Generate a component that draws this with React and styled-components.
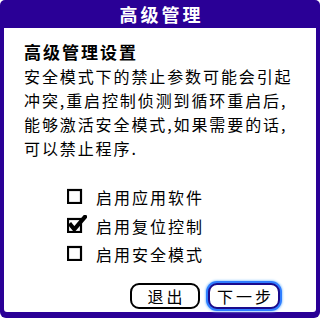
import React, { useState } from 'react';
import styled, { createGlobalStyle } from 'styled-components';

const GlobalStyle = createGlobalStyle`
  html, body {
    margin: 0;
    padding: 0;
    background: #ffffff;
  }
  body {
    font-family: "Noto Sans CJK SC", "Noto Sans", sans-serif;
  }
`;

const options = [
  { id: 'apps', label: '启用应用软件', checked: false },
  { id: 'reset', label: '启用复位控制', checked: true },
  { id: 'safe', label: '启用安全模式', checked: false },
];

const lines = [
  '安全模式下的禁止参数可能会引起',
  '冲突,重启控制侦测到循环重启后,',
  '能够激活安全模式,如果需要的话,',
  '可以禁止程序.',
];

const CheckIcon = ({ checked }) => (
  <svg width="20" height="18" viewBox="0 0 20 18">
    <rect x="1" y="4" width="13" height="13" fill="#fff" stroke="#000" strokeWidth="2.2" />
    {checked && (
      <path d="M3.8 10 L7.3 14.3 L18 1.8" fill="none" stroke="#000" strokeWidth="4.2" strokeLinecap="square" strokeLinejoin="miter" />
    )}
  </svg>
);

const App = () => {
  const [opts, setOpts] = useState(options);

  const toggle = (id) => {
    setOpts((list) => list.map((o) => (o.id === id ? { ...o, checked: !o.checked } : o)));
  };

  return (
    <>
      <GlobalStyle />
      <Dialog>
        <TitleBar>高级管理</TitleBar>
        <Body>
          <Heading>高级管理设置</Heading>
          <Text>
            {lines.map((l, i) => (
              <Line key={i}>{l}</Line>
            ))}
          </Text>
          <OptionList>
            {opts.map((o) => (
              <Option key={o.id} onClick={() => toggle(o.id)}>
                <CheckIcon checked={o.checked} />
                <OptionLabel>{o.label}</OptionLabel>
              </Option>
            ))}
          </OptionList>
          <ButtonRow>
            <Button>退出</Button>
            <Button $focused>下一步</Button>
          </ButtonRow>
        </Body>
      </Dialog>
    </>
  );
};

const Dialog = styled.div`
  width: 320px;
  height: 318px;
  box-sizing: border-box;
  display: flex;
  flex-direction: column;
  background-color: #2a0096;
  border-radius: 5px 5px 6px 6px;
  padding: 0 4px 6px 4px;
`;

const TitleBar = styled.div`
  height: 28px;
  display: flex;
  align-items: center;
  justify-content: center;
  color: #ffffff;
  font-weight: 700;
  font-size: 18px;
  letter-spacing: 3px;
  padding-left: 3px;
`;

const Body = styled.div`
  flex: 1;
  display: flex;
  flex-direction: column;
  background-color: #ffffff;
  border-radius: 0 0 3px 3px;
  padding: 12px 0 0 20px;
  color: #000;
`;

const Heading = styled.div`
  font-weight: 700;
  font-size: 17px;
  line-height: 24px;
  letter-spacing: 2px;
`;

const Text = styled.div`
  font-size: 16px;
  line-height: 24px;
  letter-spacing: 1.9px;
`;

const Line = styled.div`
  white-space: nowrap;
`;

const OptionList = styled.div`
  display: flex;
  flex-direction: column;
  margin-top: 23px;
  padding-left: 43px;
`;

const Option = styled.div`
  height: 28.5px;
  display: flex;
  align-items: center;
  gap: 9px;
  cursor: pointer;

  svg {
    margin-top: -4px;
  }
`;

const OptionLabel = styled.span`
  font-size: 16px;
  letter-spacing: 2px;
`;

const ButtonRow = styled.div`
  display: flex;
  justify-content: flex-end;
  gap: 8px;
  margin-top: 14px;
  padding-right: 36px;
`;

const Button = styled.button`
  width: ${(p) => (p.$focused ? '72px' : '70px')};
  height: 26px;
  box-sizing: border-box;
  padding: 0 0 0 3px;
  background: #ffffff;
  border: 2px solid ${(p) => (p.$focused ? '#1a0a8c' : '#000000')};
  border-radius: 9px;
  font-family: "Noto Sans CJK SC", "Noto Sans", sans-serif;
  font-size: 16px;
  letter-spacing: 3px;
  color: #000;
  line-height: 22px;
  box-shadow: ${(p) => (p.$focused ? '0 0 0 2px #2f7dff, 0 0 2px 3px #a8d4ff' : 'none')};
`;

export default App;
